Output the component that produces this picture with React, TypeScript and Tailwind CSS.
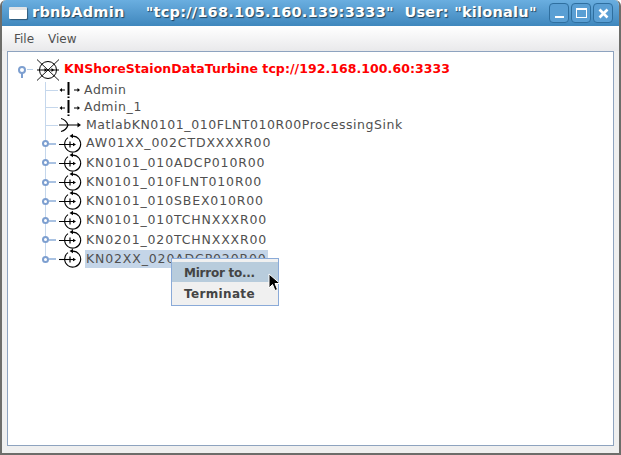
import React from 'react';

const font = 'font-["DejaVu_Sans",sans-serif]';

const ReflectorIcon = () => (
  <svg width="24" height="24" viewBox="0 0 24 24" fill="none" stroke="black" strokeWidth="1" className="shrink-0">
    <circle cx="12" cy="12" r="8.5" />
    <path d="M1 1.5 L23 22.5 M23 1.5 L1 22.5" strokeWidth="0.9" />
    <path d="M1 12 H23" />
    <path d="M11 12 L8.5 10 V14 Z M18 12 L15.5 10 V14 Z" fill="black" stroke="none" />
  </svg>
);

const ClientIcon = () => (
  <svg width="24" height="16" viewBox="0 0 24 16" fill="none" stroke="black" className="shrink-0">
    <path d="M3 8 H7" strokeWidth="1.2" />
    <path d="M4 6 L1.5 8 L4 10 Z" fill="black" stroke="none" />
    <path d="M10.5 0 V16" strokeWidth="2" strokeDasharray="13 1.5" />
    <path d="M16 8 H20" strokeWidth="1.2" />
    <path d="M19.5 6 L22 8 L19.5 10 Z" fill="black" stroke="none" />
  </svg>
);

const SinkIcon = () => (
  <svg width="24" height="16" viewBox="0 0 24 16" fill="none" stroke="black" strokeWidth="1.2" className="shrink-0">
    <path d="M1 8 H20" />
    <path d="M3 1.5 C7 2.5 9 5 10 8 C9 11 7 13.5 3 14.5" />
    <path d="M19.5 5.5 L23 8 L19.5 10.5 Z" fill="black" stroke="none" />
  </svg>
);

const SourceIcon = () => (
  <svg width="24" height="24" viewBox="0 0 24 24" fill="none" stroke="black" strokeWidth="1.1" className="shrink-0">
    <path d="M13.5 4.1 A8 8 0 1 1 9 5.6" />
    <path d="M14 1.8 L10.5 4 L14 6.2 Z" fill="black" stroke="none" />
    <path d="M0 12.5 H14" />
    <path d="M11 9.5 V15.5" strokeWidth="1.2" />
    <path d="M14 10.7 L17 12.5 L14 14.3 Z" fill="black" stroke="none" />
  </svg>
);

const sources = [
  'AW01XX_002CTDXXXXR00',
  'KN0101_010ADCP010R00',
  'KN0101_010FLNT010R00',
  'KN0101_010SBEX010R00',
  'KN0101_010TCHNXXXR00',
  'KN0201_020TCHNXXXR00',
  'KN02XX_020ADCP020R00',
];

const Handle = () => (
  <span className="flex items-center w-[13px] shrink-0">
    <span className="relative w-[7px] h-[7px] -ml-[4px] rounded-full border-2 border-[#7d9fd0] bg-white shrink-0" />
    <span className="w-[7px] h-[2px] bg-[#a9c2e2]" />
  </span>
);

const Row = ({ children, last, tall }: { children: React.ReactNode; last?: boolean; tall?: boolean }) => (
  <div className={`relative flex items-center ml-[37px] pl-px ${tall ? 'h-[19.25px]' : 'h-[17.5px]'}`}>
    <span className={`absolute left-0 top-0 w-px bg-[#c5d7ec] ${last ? 'h-1/2' : 'h-full'}`} />
    {children}
  </div>
);

export default function App() {
  return (
    <div className={`w-[621px] h-[455px] bg-[#efefef] flex flex-col overflow-hidden border-x-2 border-b-2 border-[#6d6d6a] rounded-t-[6px] ${font}`}>
      <div className="h-[26px] shrink-0 bg-gradient-to-b from-[#6aaee0] to-[#3f87bd] flex items-center pl-[7px] pr-[6px] text-white">
        <span className="w-[18px] h-[12px] shrink-0 bg-white border-t-[3px] border-[#dfe3e6] rounded-[1px] mr-[5px] shadow-[1px_1px_1px_rgba(0,0,0,0.4)]" />
        <span className="text-[14.5px] font-bold tracking-[0.25px] whitespace-pre [text-shadow:1px_1px_1px_rgba(0,0,0,0.55)]">rbnbAdmin    "tcp://168.105.160.139:3333"  User: "kilonalu"</span>
        <div className="ml-auto flex gap-[2px]">
          <span className="w-[20px] h-[20px] rounded-[4px] border border-[#2f6f9f] bg-[#5a9fd4] flex items-end justify-center pb-[4px]">
            <span className="w-[9px] h-[2px] bg-white" />
          </span>
          <span className="w-[20px] h-[20px] rounded-[4px] border border-[#2f6f9f] bg-[#5a9fd4] flex items-center justify-center">
            <span className="w-[11px] h-[10px] border border-t-2 border-white" />
          </span>
          <span className="w-[20px] h-[20px] rounded-[4px] border border-[#2f6f9f] bg-[#5a9fd4] flex items-center justify-center">
            <svg width="11" height="11" viewBox="0 0 11 11" stroke="white" strokeWidth="2.6">
              <path d="M1.5 1.5 L9.5 9.5 M9.5 1.5 L1.5 9.5" />
            </svg>
          </span>
        </div>
      </div>

      <div className="h-[25px] shrink-0 bg-gradient-to-b from-white to-[#e9e9eb] flex items-center gap-[14px] pl-[12px] text-[12px] text-[#505050]">
        <span>File</span>
        <span>View</span>
      </div>

      <div className="relative flex-1 mx-[5px] mb-[7px] bg-white border border-[#8ea3bf] pt-[6px] text-[12.5px] text-[#505050] tracking-[0.55px]">
        <div className="flex items-center h-[23.5px] ml-[10px]">
          <span className="relative w-[8px] h-[8px] rounded-full border-2 border-[#7d9fd0] shrink-0">
            <span className="absolute left-[1px] top-[4px] w-[2px] h-[6px] bg-[#7d9fd0]" />
          </span>
          <span className="w-[6px] h-px ml-[1px] mr-[3px] bg-[#b8cfe8]" />
          <ReflectorIcon />
          <span className="ml-[4px] font-bold text-[#ff0000] text-[12.5px] tracking-[0.06px] whitespace-nowrap">KNShoreStaionDataTurbine tcp://192.168.100.60:3333</span>
        </div>

        <Row>
          <span className="w-[12px] h-px bg-[#c5d7ec] shrink-0" />
          <ClientIcon />
          <span className="ml-[2px]">Admin</span>
        </Row>
        <Row>
          <span className="w-[12px] h-px bg-[#c5d7ec] shrink-0" />
          <ClientIcon />
          <span className="ml-[2px]">Admin_1</span>
        </Row>
        <Row>
          <span className="w-[12px] h-px bg-[#c5d7ec] shrink-0" />
          <SinkIcon />
          <span className="ml-[4px]">MatlabKN0101_010FLNT010R00ProcessingSink</span>
        </Row>
        {sources.map((name, i) => {
          const last = i === sources.length - 1;
          return (
            <Row key={name} tall last={last}>
              <Handle />
              <SourceIcon />
              <span className={`ml-[2px] h-[18px] px-px flex items-center tracking-[0.85px] ${last ? 'bg-[#c4d5e8]' : ''}`}>{name}</span>
            </Row>
          );
        })}

        <div className="absolute left-[163px] top-[206px] w-[108px] h-[48px] bg-[#f0f0f0] border border-[#8aaad8] text-[12px] font-bold tracking-normal text-[#444] pt-[3px]">
          <div className="h-[20px] pt-[2px] bg-[#b8ccdc] flex items-center pl-[12px] tracking-[-0.25px]">Mirror to...</div>
          <div className="h-[22px] pt-[2px] flex items-center pl-[12px] tracking-[0.35px]">Terminate</div>
        </div>

        <svg className="absolute left-[260px] top-[221px]" width="13" height="19" viewBox="0 0 13 19">
          <path d="M1 1 V15 L4.5 11.5 L7 17.5 L9.5 16.5 L7 10.5 L12 10.5 Z" fill="black" stroke="white" strokeWidth="1" />
        </svg>
      </div>
    </div>
  );
}
